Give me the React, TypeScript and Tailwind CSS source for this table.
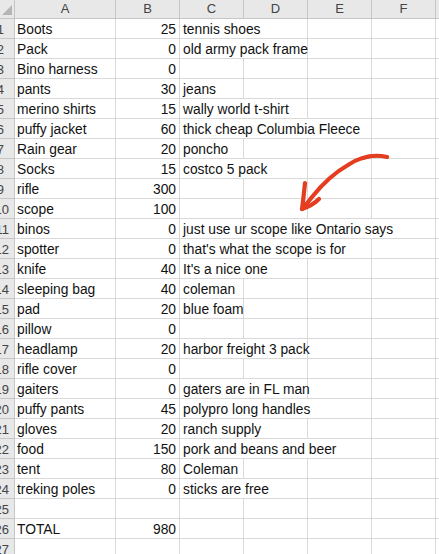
const rows: [string, string, string, number][] = [
  ["Boots", "25", "tennis shoes", 2],
  ["Pack", "0", "old army pack frame", 2],
  ["Bino harness", "0", "", 0],
  ["pants", "30", "jeans", 1],
  ["merino shirts", "15", "wally world t-shirt", 2],
  ["puffy jacket", "60", "thick cheap Columbia Fleece", 3],
  ["Rain gear", "20", "poncho", 1],
  ["Socks", "15", "costco 5 pack", 2],
  ["rifle", "300", "", 0],
  ["scope", "100", "", 0],
  ["binos", "0", "just use ur scope like Ontario says", 4],
  ["spotter", "0", "that's what the scope is for", 3],
  ["knife", "40", "It's a nice one", 2],
  ["sleeping bag", "40", "coleman", 1],
  ["pad", "20", "blue foam", 1],
  ["pillow", "0", "", 0],
  ["headlamp", "20", "harbor freight 3 pack", 2],
  ["rifle cover", "0", "", 0],
  ["gaiters", "0", "gaters are in FL man", 2],
  ["puffy pants", "45", "polypro long handles", 3],
  ["gloves", "20", "ranch supply", 2],
  ["food", "150", "pork and beans and beer", 3],
  ["tent", "80", "Coleman", 1],
  ["treking poles", "0", "sticks are free", 2],
  ["", "", "", 0],
  ["TOTAL", "980", "", 0],
  ["", "", "", 0],
];

const spanClass: Record<number, string> = {
  1: "col-span-1",
  2: "col-span-2",
  3: "col-span-3",
  4: "col-span-4",
};

const cell = "h-5 border-r border-b border-[#d9d9d9] pt-px leading-[19px]";
const head = "h-[19px] border-r border-b border-[#c6c6c6] bg-[#e8e8e8] flex items-center justify-center text-[13px] text-[#444]";

function Arrow() {
  return (
    <svg className="absolute left-[290px] top-[148px]" width="105" height="70" viewBox="0 0 105 70" fill="none">
      <path
        d="M97 9 C 84 6, 70 9, 58 17 C 44 25, 30 39, 22 49 C 18 54, 15 58, 12 61"
        stroke="#e43d1f"
        strokeWidth="4.2"
        strokeLinecap="round"
      />
      <path d="M98 9 C 90 7, 82 8, 72 11" stroke="#e43d1f" strokeWidth="2.5" strokeLinecap="round" />
      <path d="M15 35 C 14 45, 13 54, 12 61 C 18 59, 24 56, 29 51" stroke="#e43d1f" strokeWidth="4.2" strokeLinecap="round" strokeLinejoin="round" />
    </svg>
  );
}

export default function App() {
  return (
    <div className="relative h-[554px] w-[439px] overflow-hidden bg-white font-['Liberation_Sans',Arial,sans-serif] text-[13.8px] text-[#111]">
      <div className="grid grid-cols-[15px_101px_64px_64px_64px_64px_64px_64px]">
        <div className="flex h-[19px] items-end justify-end overflow-hidden border-r border-b border-[#c6c6c6] bg-[#e8e8e8] pr-[2px] pb-[3px]">
          <div className="h-0 w-0 border-b-[10px] border-l-[10px] border-b-[#b5b5b5] border-l-transparent" />
        </div>
        {["A", "B", "C", "D", "E", "F", ""].map((c, i) => (
          <div key={i} className={head}>{c}</div>
        ))}
        {rows.map(([a, b, c, span], i) => (
          <div key={i} className="contents">
            <div
              className={`flex h-5 justify-end overflow-hidden whitespace-nowrap border-r border-b border-[#c6c6c6] bg-[#e8e8e8] pt-px text-[13px] leading-[19px] text-[#444] ${
                i + 1 >= 10 ? "pr-[5px]" : "pr-[10px]"
              }`}
            >
              <span className="shrink-0">{i + 1}</span>
            </div>
            <div className={`${cell} overflow-hidden whitespace-nowrap pl-[2px]`}>{a}</div>
            <div className={`${cell} pr-[3px] text-right`}>{b}</div>
            {span > 0 ? (
              <div className={`${cell} ${spanClass[span]} whitespace-nowrap pl-[3px]`}>{c}</div>
            ) : (
              <div className={cell} />
            )}
            {Array.from({ length: span > 0 ? 5 - span : 4 }).map((_, j) => (
              <div key={j} className={cell} />
            ))}
          </div>
        ))}
      </div>
      <Arrow />
    </div>
  );
}
